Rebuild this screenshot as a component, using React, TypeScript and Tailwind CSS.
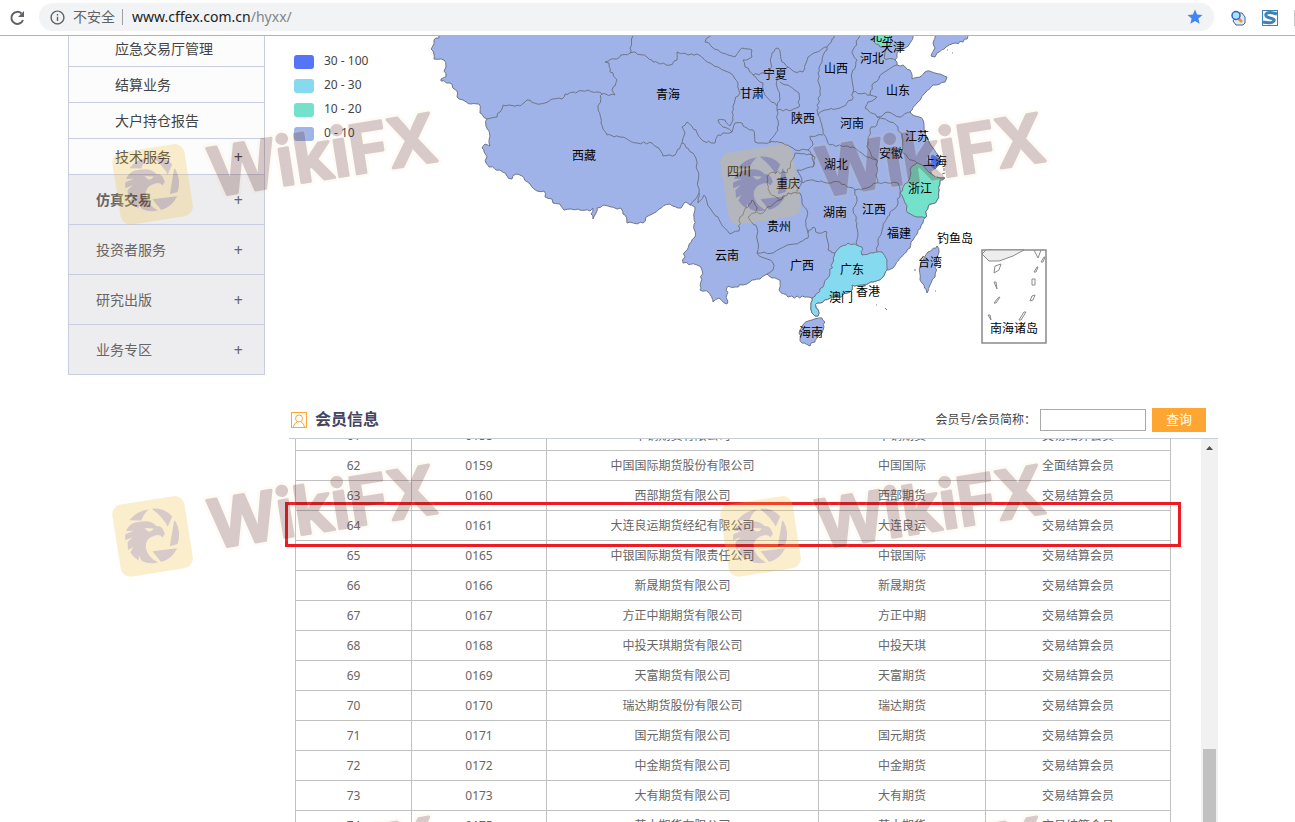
import React from 'react';
import { MdInfoOutline, MdStar } from 'react-icons/md';

type Point = [number, number];

const SUB_ITEMS = [
  { label: '应急交易厅管理', expandable: false },
  { label: '结算业务', expandable: false },
  { label: '大户持仓报告', expandable: false },
  { label: '技术服务', expandable: true }
];

const MENU_ITEMS = [
  { label: '仿真交易', active: true },
  { label: '投资者服务', active: false },
  { label: '研究出版', active: false },
  { label: '业务专区', active: false }
];

const LEGEND = [
  { label: '30 - 100', color: 'bg-[#5475f5]' },
  { label: '20 - 30', color: 'bg-[#85daef]' },
  { label: '10 - 20', color: 'bg-[#74e2ca]' },
  { label: '0 - 10', color: 'bg-[#9fb5ea]' }
];

const MEMBERS = [
  ['61', '0158', '中钢期货有限公司', '中钢期货', '交易结算会员'],
  ['62', '0159', '中国国际期货股份有限公司', '中国国际', '全面结算会员'],
  ['63', '0160', '西部期货有限公司', '西部期货', '交易结算会员'],
  ['64', '0161', '大连良运期货经纪有限公司', '大连良运', '交易结算会员'],
  ['65', '0165', '中银国际期货有限责任公司', '中银国际', '交易结算会员'],
  ['66', '0166', '新晟期货有限公司', '新晟期货', '交易结算会员'],
  ['67', '0167', '方正中期期货有限公司', '方正中期', '交易结算会员'],
  ['68', '0168', '中投天琪期货有限公司', '中投天琪', '交易结算会员'],
  ['69', '0169', '天富期货有限公司', '天富期货', '交易结算会员'],
  ['70', '0170', '瑞达期货股份有限公司', '瑞达期货', '交易结算会员'],
  ['71', '0171', '国元期货有限公司', '国元期货', '交易结算会员'],
  ['72', '0172', '中金期货有限公司', '中金期货', '交易结算会员'],
  ['73', '0173', '大有期货有限公司', '大有期货', '交易结算会员'],
  ['74', '0175', '英大期货有限公司', '英大期货', '交易结算会员']
];

const MAINLAND =
  '441,30 439,38 434,40 434,44 431,49 433,51 434,59 444,60 446,67 444,71 446,77 441,79 441,81 450,83 457,91 457,97 463,100 471,104 479,104 480,113 487,119 486,126 490,136 490,146 485,144 482,148 486,155 486,163 489,167 500,170 507,176 512,179 516,174 522,176 530,184 537,191 544,191 545,197 552,199 553,203 560,204 564,210 571,209 580,210 590,211 593,208 591,214 593,219 596,213 597,208 604,205 611,207 617,209 621,208 623,214 625,215 627,223 643,223 648,216 659,209 670,204 678,208 681,208 685,202 690,205 695,207 694,217 695,237 685,252 683,263 697,265 702,270 700,290 708,292 713,302 719,298 727,304 727,287 735,287 743,285 752,280 760,279 767,274 772,278 780,280 779,290 788,297 805,297 812,298 811,303 812,313 815,316 818,316 819,313 816,308 817,303 823,302 830,298 840,297 847,293 852,290 852,285 862,285 873,282 882,278 887,270 893,268 900,258 910,248 913,240 918,230 925,218 928,207 937,200 939,190 940,180 945,178 937,177 930,173 935,169 940,162 938,155 933,148 927,137 923,120 910,112 917,103 925,93 933,85 945,82 947,77 935,73 927,71 920,77 912,79 910,70 903,65 897,65 895,60 898,52 905,48 910,43 913,37 914,30';

const BORDERS = [
  '487,119 497,117 503,105 520,106 527,100 540,104 552,99 562,99 565,94 588,90 602,94 615,95 612,90 617,80 613,73 610,72 609,63 605,62 630,53 633,30',
  '630,53 635,52 647,57 653,62 670,65 677,60 677,52 688,55 697,54 710,63 718,67 730,73 738,83 740,93 735,100 732,112 733,120 730,126 725,120 718,120 723,127 732,132 735,123 742,123 747,128 753,130 755,142 763,143 775,142 783,143',
  '732,132 718,135 715,143 703,141 697,133 687,122 682,127 685,133 682,143',
  '602,94 598,107 601,123 607,135 620,137 637,143 652,143 660,150 663,156 675,155 682,143 693,153 697,163 699,193 697,197 690,205',
  '699,193 698,203 704,195 710,208 718,217 730,234 739,231 740,217 748,207 752,200 757,207 755,213 748,217 757,228 758,243 757,253 773,263 773,270 767,274',
  '767,177 772,172 787,173 795,153 813,155 813,167 797,170 802,180 797,193 788,193 780,200 770,193 767,183 767,177',
  '755,213 763,213 767,207 780,200 788,193 800,193 802,203 807,210 806,223 808,238 800,242 787,245 773,253 757,253',
  '797,180 803,183 813,180 827,183 840,182 847,187 855,190 857,200 853,210 857,223 857,245',
  '808,233 813,227 818,233 827,232 828,250 835,253',
  '877,252 878,240 883,227 890,212 897,206 900,193 898,183 888,183 877,183 867,188 855,190',
  '868,142 867,147 872,157 877,160 877,183',
  '818,115 825,110 840,108 852,100 853,92 870,95 877,97 868,102 865,108 877,117 890,122 898,127 902,137 903,153 910,160 917,163',
  '877,117 888,112 900,117 910,112',
  '880,118 877,125 871,127 868,140 867,147',
  '818,115 823,133 830,145 853,147 867,157 877,160',
  '823,135 810,136 813,145 808,150 815,157 813,167',
  '783,143 795,150 808,150',
  '777,106 777,110 778,130 770,140 770,143',
  '777,110 792,110 799,107 799,93 788,85 780,82',
  '753,75 770,72 772,53 778,48 782,62 788,67 780,73 777,80 777,87 780,100 777,106 765,95 763,83 753,75',
  '716,30 705,42 718,50 728,55 735,57 742,48 752,50 752,57 743,60 745,67 753,75',
  '788,67 795,72 803,72 808,57 817,52 827,47 837,30',
  '827,47 822,60 818,73 820,93 817,110 818,115',
  '862,30 852,53 857,60 852,73 853,92',
  '870,95 872,85 883,73 897,65',
  '890,45 885,52 884,58 895,60'
];

const GUANGDONG =
  '835,253 840,247 848,243 862,247 862,255 873,253 882,252 887,260 887,270 882,278 873,282 862,285 852,285 852,290 847,293 840,297 830,298 823,302 817,303 816,308 819,313 818,316 815,316 812,313 811,303 812,298 823,287 830,273 835,253';
const ZHEJIANG =
  '900,193 903,187 910,177 910,170 917,163 922,165 930,173 937,177 945,178 940,180 939,190 937,200 928,207 925,218 917,217 908,213 905,203 900,193';
const SHANGHAI = '930,165 932,155 936,157 940,162 935,169 930,165';
const HANGZHOU_BAY = '931,172 935,169 940,171 939,175 936,177 931,172';
const BEIJING = '872,40 876,36 880,30 890,30 890,45 880,47 872,40';
const LIAONING = '939,30 933,43 935,48 931,56 935,57 937,53 946,47 955,43 963,42 968,36 969,30';
const TAIWAN = '937,246 939,252 937,262 935,277 930,285 927,293 924,285 920,280 920,267 928,252 937,246';
const HAINAN = '812,320 822,318 825,322 822,333 810,346 802,343 799,333 803,325 812,320';

const MAP_LABELS: { name: string; x: number; y: number }[] = [
  { name: '青海', x: 668, y: 95 },
  { name: '西藏', x: 584, y: 156 },
  { name: '宁夏', x: 775, y: 75 },
  { name: '甘肃', x: 752, y: 94 },
  { name: '山西', x: 836, y: 69 },
  { name: '北京', x: 882, y: 37 },
  { name: '河北', x: 872, y: 59 },
  { name: '天津', x: 893, y: 48 },
  { name: '山东', x: 898, y: 91 },
  { name: '陕西', x: 803, y: 119 },
  { name: '河南', x: 852, y: 124 },
  { name: '江苏', x: 917, y: 137 },
  { name: '安徽', x: 891, y: 154 },
  { name: '上海', x: 935, y: 162 },
  { name: '浙江', x: 920, y: 189 },
  { name: '湖北', x: 836, y: 165 },
  { name: '四川', x: 739, y: 172 },
  { name: '重庆', x: 788, y: 184 },
  { name: '湖南', x: 835, y: 213 },
  { name: '江西', x: 874, y: 210 },
  { name: '贵州', x: 779, y: 227 },
  { name: '云南', x: 727, y: 256 },
  { name: '广西', x: 802, y: 266 },
  { name: '广东', x: 852, y: 270 },
  { name: '福建', x: 899, y: 234 },
  { name: '钓鱼岛', x: 955, y: 239 },
  { name: '台湾', x: 930, y: 263 },
  { name: '香港', x: 868, y: 292 },
  { name: '澳门', x: 841, y: 298 },
  { name: '海南', x: 811, y: 333 },
  { name: '南海诸岛', x: 1014, y: 329 }
];

const WATERMARKS: Point[] = [
  [152, 184],
  [760, 184],
  [152, 536],
  [760, 536],
  [152, 888],
  [760, 888]
];

// Breaks every segment into short steps and nudges them, so borders look like
// surveyed lines. The nudge depends on position only: shared edges stay shared.
const rough = (source: string) => {
  const pts = source.split(' ').map((p) => p.split(',').map(Number) as Point);
  const out: Point[] = [pts[0]];
  for (let i = 1; i < pts.length; i++) {
    const [x0, y0] = pts[i - 1];
    const [x1, y1] = pts[i];
    const steps = Math.max(1, Math.round(Math.hypot(x1 - x0, y1 - y0) / 3));
    for (let s = 1; s <= steps; s++) {
      const x = x0 + ((x1 - x0) * s) / steps;
      const y = y0 + ((y1 - y0) * s) / steps;
      const k = s === steps ? 0 : 1;
      out.push([x + k * Math.sin(x * 2.1 + y * 3.7), y + k * Math.cos(x * 3.3 - y * 1.9)]);
    }
  }
  return out.map(([x, y]) => `${x.toFixed(1)},${y.toFixed(1)}`).join(' ');
};

const BrowserBar: React.FC = () => (
  <header className="flex h-9 shrink-0 items-center border-b border-[#b3b3b5] bg-white pl-2">
    <button type="button" aria-label="刷新" className="mr-3">
      <svg width="19" height="18" viewBox="0 0 19 18" fill="none" aria-hidden="true">
        <path d="M13.500 4.500A6 6 0 1 0 15 11" stroke="#5f6368" strokeWidth="2" />
        <path d="M16 2v6h-6z" fill="#5f6368" />
      </svg>
    </button>
    <div className="mb-px flex h-7 flex-1 items-center rounded-full bg-[#f1f3f4] px-2.5 text-sm">
      <MdInfoOutline size={17} className="text-[#5f6368]" />
      <span className="ml-[7px] text-[#5f6368]">不安全</span>
      <span className="ml-[7px] mr-[9px] h-4 w-px bg-[#9aa0a6]" />
      <a href="#members" className="text-[#202124]">
        www.cffex.com.cn<span className="text-[#80868b]">/hyxx/</span>
      </a>
      <MdStar size={18} className="ml-auto text-[#4285f4]" />
    </div>
    <div className="flex items-center gap-4 pl-4">
      <svg width="16" height="16" viewBox="0 0 16 16" aria-hidden="true">
        <path d="M8 3h4l3 4v6l-2 2H6l-3-4z" fill="#dfe8f5" stroke="#3c63a8" />
        <path d="m8 8 3 3" stroke="#f0941d" strokeWidth="3" strokeLinecap="round" />
        <circle cx="6" cy="5.500" r="4" fill="#a9e2ff" stroke="#2a66c8" strokeWidth="1.500" />
      </svg>
      <svg width="16" height="16" viewBox="0 0 16 16" fill="none" aria-hidden="true">
        <rect x=".5" y=".5" width="15" height="15" fill="#fff" stroke="#3d83b5" />
        <path d="M15 4Q6 1 4 4q-1 3 4 4 5 1 4 3-2 3-11 1" stroke="#3d83b5" strokeWidth="3" />
      </svg>
      <span className="h-4 w-px bg-[#c8cacd]" />
    </div>
  </header>
);

const Sidebar: React.FC = () => (
  <nav className="w-[197px] shrink-0">
    <ul className="-mt-[5px] border-x border-[#c9cde0] text-sm">
      {SUB_ITEMS.map((item) => (
        <li key={item.label} className="border-b border-[#c9cde0] bg-[#fcfcfc]">
          <a href="#members" className="flex h-[35px] items-center justify-between pl-[46px] pr-[21px] text-[#444]">
            {item.label}
            {item.expandable && <span className="text-base">+</span>}
          </a>
        </li>
      ))}
      {MENU_ITEMS.map((item) => (
        <li key={item.label} className="border-b border-[#c9cde0] bg-[#ededef]">
          <a href="#members" className="flex h-[49px] items-center justify-between pl-[27px] pr-[21px] text-[#666]">
            <span className={item.active ? 'font-bold' : ''}>{item.label}</span>
            <span className="text-base">+</span>
          </a>
        </li>
      ))}
    </ul>
  </nav>
);

const ChinaMap: React.FC = () => (
  <svg width="680" height="340" viewBox="430 36 680 340" className="shrink-0" role="img" aria-label="会员分布">
    <g fill="#9fb3e8" stroke="#6f7686" strokeLinejoin="round">
      <polygon points={rough(MAINLAND)} />
      <polygon points={rough(LIAONING)} />
      <polygon points={rough(TAIWAN)} />
      <polygon points={rough(HAINAN)} />
      <polygon points={rough(GUANGDONG)} fill="#85daef" />
      <polygon points={rough(ZHEJIANG)} fill="#74e2ca" />
      <polygon points={rough(BEIJING)} fill="#74e2ca" />
      <polygon points={HANGZHOU_BAY} fill="#fff" stroke="none" />
      <polygon points={rough(SHANGHAI)} fill="#4a6cf0" />
      {BORDERS.map((line) => (
        <polyline key={line} points={rough(line)} fill="none" />
      ))}
      <path d="M944 168v3M942 174l3-1M885 308l2 2M876 305h1M914 270h2M935 291h1M947 50h1M952 53h1M857 286h3" fill="none" />
    </g>
    <g fill="none" stroke="#8a8a8a">
      <rect x="982" y="250" width="64" height="93" strokeWidth="1.5" />
      <path d="m986 250-4 4 7 7h10l14-5 11-6z" fill="#ededed" />
      <path d="m1034 250 4 8 3-8M995 266l6-2-2 6-5 3zM994 282l2 0 1 7zM994 303l4-5 2-1-4 6zM988 315h2l1 5zM1019 320l5-8 2 0-5 8zM1030 301l2-5 3-1-2 5zM1032 279h3v6h-3zM1034 272l3-5h1l-2 5zM1041 262l3-5h1l-2 5z" />
    </g>
    <g fontSize="12" textAnchor="middle" fill="#000">
      {MAP_LABELS.map((label) => (
        <text key={label.name} x={label.x} y={label.y + 4}>
          {label.name}
        </text>
      ))}
    </g>
  </svg>
);

const MemberSection: React.FC = () => (
  <section id="members" className="relative flex min-h-0 flex-1 flex-col">
    <div className="flex h-9 shrink-0 items-center border-b border-[#c9cdd8] pb-0.5 pl-0.5 pr-3">
      <svg width="16" height="16" viewBox="0 0 16 16" fill="none" stroke="#ffa531" aria-hidden="true">
        <rect x=".5" y=".5" width="15" height="15" />
        <circle cx="8" cy="6.5" r="3.5" />
        <path d="M2.5 15q.5-4 3.500-5m4 0q3 1 3.500 5" />
      </svg>
      <h2 className="ml-2 pb-0.5 text-base font-bold text-[#45455f]">会员信息</h2>
      <label htmlFor="member-query" className="ml-auto text-xs text-[#444]">
        会员号/会员简称：
      </label>
      <input id="member-query" type="text" className="ml-1 h-[22px] w-[106px] border border-[#a9a9a9] bg-white px-1 text-xs" />
      <button type="button" className="ml-1.5 h-6 w-[54px] bg-[#ffa531] text-[13px] text-white">
        查询
      </button>
    </div>

    <div className="flex min-h-0 flex-1 justify-between overflow-hidden pl-1.5">
      <table className="-mt-[19px] h-0 w-[876px] table-fixed border-collapse text-center text-xs text-[#666]">
        <colgroup>
          <col className="w-[116px]" />
          <col className="w-[135px]" />
          <col className="w-[272px]" />
          <col className="w-[167px]" />
          <col className="w-[185px]" />
        </colgroup>
        <tbody>
          {MEMBERS.map((row) => (
            <tr key={row[0]} className="h-[30px]">
              {row.map((cell, idx) => (
                <td key={idx} className="border border-[#c0c0c0] p-0">
                  {cell}
                </td>
              ))}
            </tr>
          ))}
        </tbody>
      </table>
      <div className="flex w-[17px] flex-col items-center bg-[#f1f1f1]">
        <svg width="17" height="17" viewBox="0 0 17 17" className="shrink-0" aria-hidden="true">
          <path d="m5 11 3.500-4 3.500 4z" fill="#505050" />
        </svg>
        <span className="mt-[293px] w-[13px] flex-1 bg-[#c1c1c1]" />
      </div>
    </div>

    {/* marks row 64 */}
    <div className="pointer-events-none absolute -left-1 top-[99px] h-[45px] w-[896px] border-3 border-[#ed1c24]" />
  </section>
);

const Watermark: React.FC = () => (
  <svg className="pointer-events-none absolute inset-0 h-full w-full" aria-hidden="true">
    {WATERMARKS.map(([x, y]) => (
      <g key={`${x}-${y}`} transform={`translate(${x} ${y}) rotate(-9)`} opacity=".25">
        <rect x="-36" y="-36" width="73" height="73" rx="10" fill="#f0bf3c" />
        <g fill="#632f2b">
          <path d="M-20-19Q-12-27 1-27-6-22-8-17-14-18-20-19ZM4-27Q17-26 23-16L17-7Q13-18 4-27ZM25-12Q30 0 24 12L16 13 24-11ZM23 16Q16 26 5 27L-2 15Z" />
          <path d="M-25-9Q-20-17-10-16 2-16 6-9 12-9 13 0L10 3Q8-1 3 0-7 1-8 10-8 20 2 27-7 28-14 23L-16 17-17 22Q-22 18-24 13L-20 8-26 10-25 2-19-2-27 0Q-27-3-26-6L-17-8Z" />
        </g>
        <path d="M-6-9 3-7Q-1-3-4-6Z" fill="#f0bf3c" />
        <g className="text-[67px] font-semibold" fontFamily="Inter, sans-serif" strokeLinejoin="round">
          <text x="58" y="22" fill="#f3cf70" stroke="#f3cf70" strokeWidth="8" opacity=".3">
            WikiFX
          </text>
          <text x="58" y="22" fill="#632f2b" stroke="#632f2b" strokeWidth="3">
            WikiFX
          </text>
        </g>
      </g>
    ))}
  </svg>
);

export default function App() {
  return (
    <div className="relative flex h-screen flex-col overflow-hidden bg-white font-['Noto_Sans','Noto_Sans_CJK_SC',sans-serif]">
      <BrowserBar />
      <main className="flex min-h-0 flex-1 gap-6 overflow-hidden pl-[68px] pr-[77px]">
        <Sidebar />
        <div className="flex min-w-0 flex-1 flex-col">
          <div className="flex h-[367px] shrink-0">
            <ul className="flex w-[141px] shrink-0 flex-col gap-2 pl-[5px] pt-[17px] text-xs text-[#444]">
              {LEGEND.map((item) => (
                <li key={item.label} className="flex items-center gap-2.5">
                  <span className={`mt-0.5 h-3.5 w-5 rounded-[3px] ${item.color}`} />
                  {item.label}
                </li>
              ))}
            </ul>
            <ChinaMap />
          </div>
          <MemberSection />
        </div>
      </main>
      <Watermark />
    </div>
  );
}
